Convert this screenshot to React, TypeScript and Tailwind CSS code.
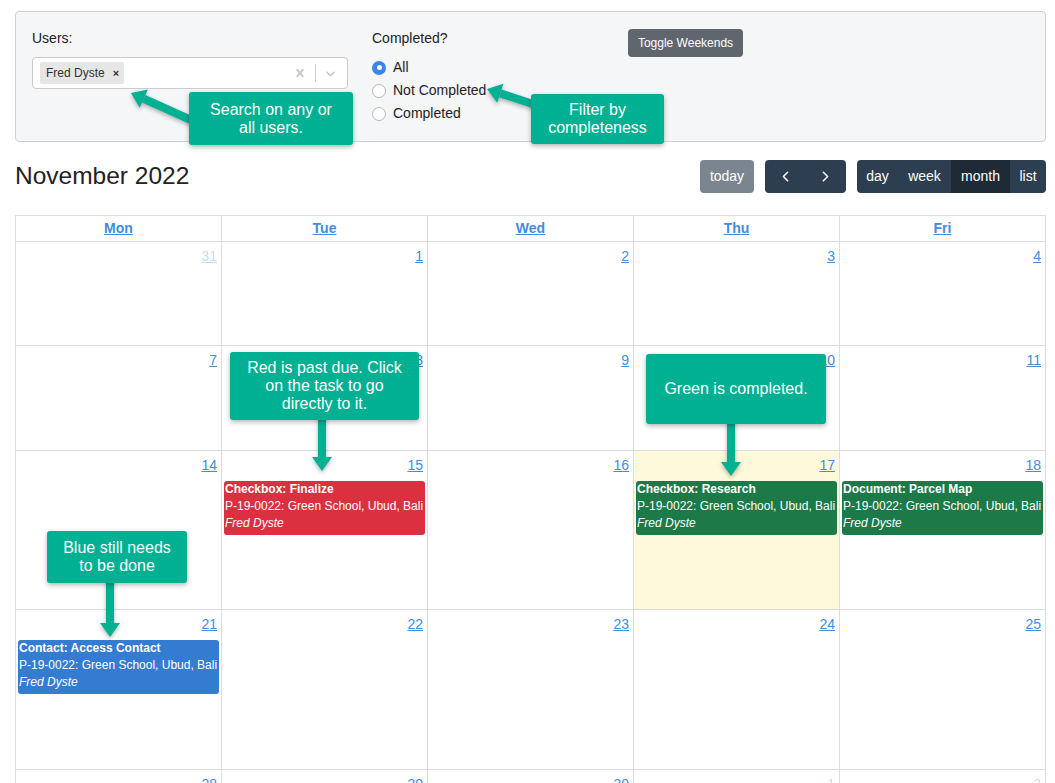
import { ChevronLeft, ChevronRight } from 'lucide-react';

type CalEvent = {
    title: string;
    project: string;
    user: string;
    color: string;
};

type Day = {
    n: number;
    other?: boolean;
    today?: boolean;
    events?: CalEvent[];
};

const project = 'P-19-0022: Green School, Ubud, Bali';

const weeks: { height: string; days: Day[] }[] = [
    { height: 'h-[104px]', days: [{ n: 31, other: true }, { n: 1 }, { n: 2 }, { n: 3 }, { n: 4 }] },
    { height: 'h-[105px]', days: [{ n: 7 }, { n: 8 }, { n: 9 }, { n: 10 }, { n: 11 }] },
    {
        height: 'h-[159px]',
        days: [
            { n: 14 },
            {
                n: 15,
                events: [{ title: 'Checkbox: Finalize', project, user: 'Fred Dyste', color: 'bg-[#db3040]' }],
            },
            { n: 16 },
            {
                n: 17,
                today: true,
                events: [{ title: 'Checkbox: Research', project, user: 'Fred Dyste', color: 'bg-[#1b7a48]' }],
            },
            {
                n: 18,
                events: [{ title: 'Document: Parcel Map', project, user: 'Fred Dyste', color: 'bg-[#1b7a48]' }],
            },
        ],
    },
    {
        height: 'h-[160px]',
        days: [
            {
                n: 21,
                events: [{ title: 'Contact: Access Contact', project, user: 'Fred Dyste', color: 'bg-[#347bd2]' }],
            },
            { n: 22 },
            { n: 23 },
            { n: 24 },
            { n: 25 },
        ],
    },
    { height: 'h-[160px]', days: [{ n: 28 }, { n: 29 }, { n: 30 }, { n: 1, other: true }, { n: 2, other: true }] },
];

const dayNames = ['Mon', 'Tue', 'Wed', 'Thu', 'Fri'];

// tail (x1,y1) -> tip (x2,y2)
function Arrow({ x1, y1, x2, y2 }: { x1: number; y1: number; x2: number; y2: number }) {
    const dx = x2 - x1;
    const dy = y2 - y1;
    const len = Math.hypot(dx, dy);
    const ux = dx / len;
    const uy = dy / len;
    const px = -uy;
    const py = ux;
    const hl = 14;
    const hw = 10;
    const bx = x2 - ux * hl;
    const by = y2 - uy * hl;
    return (
        <g>
            <line x1={x1} y1={y1} x2={bx} y2={by} stroke="#00b092" strokeWidth={8} />
            <polygon
                points={`${x2},${y2} ${bx + px * hw},${by + py * hw} ${bx - px * hw},${by - py * hw}`}
                fill="#00b092"
            />
        </g>
    );
}

function Callout({ className, lines }: { className: string; lines: string[] }) {
    return (
        <div
            className={`absolute flex flex-col items-center justify-center rounded-[3px] bg-[#00b092] text-center text-[16px] leading-[18px] text-white shadow-[0_2px_5px_rgba(0,0,0,0.3)] ${className}`}
        >
            {lines.map((l) => (
                <div key={l}>{l}</div>
            ))}
        </div>
    );
}

function Radio({ checked, label }: { checked?: boolean; label: string }) {
    return (
        <div className="flex h-[23px] items-center">
            {checked ? (
                <span className="flex h-[14px] w-[14px] items-center justify-center rounded-full bg-[#3b86e8]">
                    <span className="h-[5px] w-[5px] rounded-full bg-white" />
                </span>
            ) : (
                <span className="h-[14px] w-[14px] rounded-full border border-[#b8b8b8] bg-white" />
            )}
            <span className="ml-[7px] text-[14px] text-[#222]">{label}</span>
        </div>
    );
}

export default function App() {
    return (
        <div
            className="relative min-h-[783px] w-full overflow-hidden bg-white text-[#212529]"
            style={{ fontFamily: '"Liberation Sans", Arial, sans-serif' }}
        >
            <div className="ml-[15px] w-[1031px] pt-[11px]">
                {/* filter panel */}
                <div className="flex h-[131px] rounded-[4px] border border-[#cfd1d4] bg-[#f5f6f8] pl-[16px] pt-[18px]">
                    <div className="w-[316px]">
                        <div className="text-[14px] leading-[17px] text-[#222]">Users:</div>
                        <div className="mt-[10px] flex h-[32px] items-center rounded-[4px] border border-[#ccc] bg-white pl-[7px]">
                            <div className="flex h-[22px] items-center rounded-[2px] bg-[#e6e6e6] pl-[6px] pr-[5px] text-[12px] text-[#333]">
                                Fred Dyste
                                <span className="ml-[8px] text-[11px] font-bold text-[#333]">×</span>
                            </div>
                            <div className="flex-1" />
                            <svg viewBox="0 0 20 20" className="h-[16px] w-[16px] fill-[#c8c8c8]">
                                <path d="M14.348 14.849c-0.469 0.469-1.229 0.469-1.697 0l-2.651-3.030-2.651 3.029c-0.469 0.469-1.229 0.469-1.697 0-0.469-0.469-0.469-1.229 0-1.697l2.758-3.150-2.759-3.152c-0.469-0.469-0.469-1.228 0-1.697s1.228-0.469 1.697 0l2.652 3.031 2.651-3.031c0.469-0.469 1.228-0.469 1.697 0s0.469 1.229 0 1.697l-2.758 3.152 2.758 3.150c0.469 0.469 0.469 1.229 0 1.698z" />
                            </svg>
                            <div className="mx-[7px] h-[18px] w-px bg-[#ccc]" />
                            <svg viewBox="0 0 20 20" className="mr-[9px] h-[15px] w-[15px] fill-[#c8c8c8]">
                                <path d="M4.516 7.548c0.436-0.446 1.043-0.481 1.576 0l3.908 3.747 3.908-3.747c0.533-0.481 1.141-0.446 1.574 0 0.436 0.445 0.408 1.197 0 1.615-0.406 0.418-4.695 4.502-4.695 4.502-0.217 0.223-0.502 0.335-0.787 0.335s-0.57-0.112-0.789-0.335c0 0-4.287-4.084-4.695-4.502s-0.436-1.17 0-1.615z" />
                            </svg>
                        </div>
                    </div>

                    <div className="ml-[24px] w-[256px]">
                        <div className="text-[14px] leading-[17px] text-[#222]">Completed?</div>
                        <div className="mt-[9px]">
                            <Radio checked label="All" />
                            <Radio label="Not Completed" />
                            <Radio label="Completed" />
                        </div>
                    </div>

                    <div>
                        <button className="-mt-[2px] h-[28px] w-[115px] rounded-[4px] bg-[#5f666e] text-[12px] text-white">
                            Toggle Weekends
                        </button>
                    </div>
                </div>

                {/* toolbar */}
                <div className="mt-[18px] flex h-[33px] items-center">
                    <h2 className="text-[24.5px] text-[#222]">November 2022</h2>
                    <div className="flex-1" />
                    <button className="h-[33px] w-[54px] rounded-[4px] bg-[#7b858f] text-[14px] text-white">
                        today
                    </button>
                    <div className="ml-[11px] flex h-[33px] overflow-hidden rounded-[4px] bg-[#2c3e50] text-white">
                        <button className="flex w-[40px] items-center justify-center">
                            <ChevronLeft size={17} strokeWidth={2.2} />
                        </button>
                        <button className="flex w-[41px] items-center justify-center">
                            <ChevronRight size={17} strokeWidth={2.2} />
                        </button>
                    </div>
                    <div className="ml-[11px] flex h-[33px] overflow-hidden rounded-[4px] bg-[#2c3e50] text-[14px] text-white">
                        <button className="w-[41px]">day</button>
                        <button className="w-[53px]">week</button>
                        <button className="w-[59px] bg-[#1e2b37]">month</button>
                        <button className="w-[36px]">list</button>
                    </div>
                </div>

                {/* month grid */}
                <div className="mt-[22px] border-l border-t border-[#ddd]">
                    <div className="grid h-[26px] grid-cols-5">
                        {dayNames.map((d) => (
                            <div
                                key={d}
                                className="flex items-center justify-center border-b border-r border-[#ddd] text-[14px] font-bold text-[#3f8ddf] underline"
                            >
                                {d}
                            </div>
                        ))}
                    </div>
                    {weeks.map((w, wi) => (
                        <div key={wi} className={`grid grid-cols-5 ${w.height}`}>
                            {w.days.map((d, di) => (
                                <div
                                    key={di}
                                    className={`border-b border-r border-[#ddd] ${d.today ? 'bg-[#fff9db]' : ''}`}
                                >
                                    <div
                                        className={`h-[29px] pr-[4px] pt-[5px] text-right text-[14px] leading-[18px] text-[#3f8ddf] underline ${d.other ? 'opacity-30' : ''}`}
                                    >
                                        {d.n}
                                    </div>
                                    {d.events?.map((e) => (
                                        <div
                                            key={e.title}
                                            className={`mx-[2px] mt-px rounded-[3px] px-px pb-[3px] text-[12px] leading-[17px] text-white ${e.color}`}
                                        >
                                            <div className="font-bold">{e.title}</div>
                                            <div className="whitespace-nowrap">{e.project}</div>
                                            <div className="italic">{e.user}</div>
                                        </div>
                                    ))}
                                </div>
                            ))}
                        </div>
                    ))}
                </div>
            </div>

            {/* annotation arrows */}
            <svg
                className="pointer-events-none absolute left-0 top-0 h-[783px] w-[1055px] drop-shadow-[0_2px_2px_rgba(0,0,0,0.3)]"
                viewBox="0 0 1055 783"
            >
                <Arrow x1={200} y1={124} x2={131} y2={93} />
                <Arrow x1={545} y1={108} x2={487} y2={89} />
                <Arrow x1={322} y1={415} x2={322} y2={471} />
                <Arrow x1={731} y1={420} x2={731} y2={476} />
                <Arrow x1={110} y1={578} x2={110} y2={637} />
            </svg>

            <Callout className="left-[189px] top-[92px] h-[53px] w-[164px]" lines={['Search on any or', 'all users.']} />
            <Callout className="left-[531px] top-[94px] h-[50px] w-[133px]" lines={['Filter by', 'completeness']} />
            <Callout
                className="left-[230px] top-[352px] h-[68px] w-[189px]"
                lines={['Red is past due. Click', 'on the task to go', 'directly to it.']}
            />
            <Callout className="left-[646px] top-[354px] h-[70px] w-[180px]" lines={['Green is completed.']} />
            <Callout className="left-[47px] top-[531px] h-[52px] w-[140px]" lines={['Blue still needs', 'to be done']} />
        </div>
    );
}
